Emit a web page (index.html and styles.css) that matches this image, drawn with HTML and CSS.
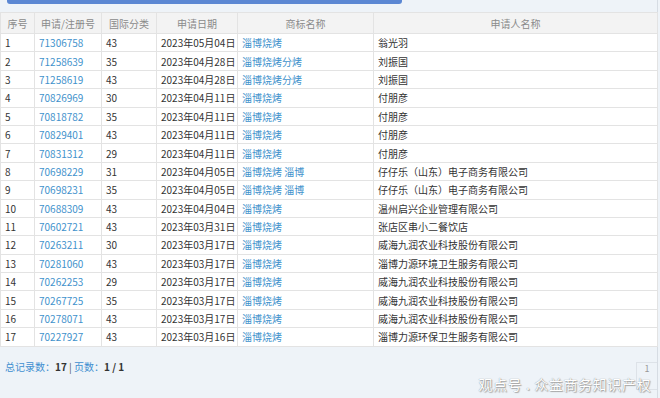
FILE: index.html
```html
<!DOCTYPE html>
<html lang="zh">
<head>
<meta charset="utf-8">
<link rel="stylesheet" href="styles.css">
</head>
<body>
<div class="page">
  <div class="topbar"></div>
  <table class="grid">
    <colgroup>
      <col class="c1"><col class="c2"><col class="c3"><col class="c4"><col class="c5"><col class="c6">
    </colgroup>
    <thead>
      <tr><th>序号</th><th>申请/注册号</th><th>国际分类</th><th>申请日期</th><th>商标名称</th><th>申请人名称</th></tr>
    </thead>
    <tbody>
      <tr><td>1</td><td><a>71306758</a></td><td>43</td><td>2023年05月04日</td><td><a>淄博烧烤</a></td><td>翁光羽</td></tr>
      <tr><td>2</td><td><a>71258639</a></td><td>35</td><td>2023年04月28日</td><td><a>淄博烧烤分烤</a></td><td>刘振国</td></tr>
      <tr><td>3</td><td><a>71258619</a></td><td>43</td><td>2023年04月28日</td><td><a>淄博烧烤分烤</a></td><td>刘振国</td></tr>
      <tr><td>4</td><td><a>70826969</a></td><td>30</td><td>2023年04月11日</td><td><a>淄博烧烤</a></td><td>付朋彦</td></tr>
      <tr><td>5</td><td><a>70818782</a></td><td>35</td><td>2023年04月11日</td><td><a>淄博烧烤</a></td><td>付朋彦</td></tr>
      <tr><td>6</td><td><a>70829401</a></td><td>43</td><td>2023年04月11日</td><td><a>淄博烧烤</a></td><td>付朋彦</td></tr>
      <tr><td>7</td><td><a>70831312</a></td><td>29</td><td>2023年04月11日</td><td><a>淄博烧烤</a></td><td>付朋彦</td></tr>
      <tr><td>8</td><td><a>70698229</a></td><td>31</td><td>2023年04月05日</td><td><a>淄博烧烤 淄博</a></td><td>仔仔乐（山东）电子商务有限公司</td></tr>
      <tr><td>9</td><td><a>70698231</a></td><td>35</td><td>2023年04月05日</td><td><a>淄博烧烤 淄博</a></td><td>仔仔乐（山东）电子商务有限公司</td></tr>
      <tr><td>10</td><td><a>70688309</a></td><td>43</td><td>2023年04月04日</td><td><a>淄博烧烤</a></td><td>温州启兴企业管理有限公司</td></tr>
      <tr><td>11</td><td><a>70602721</a></td><td>43</td><td>2023年03月31日</td><td><a>淄博烧烤</a></td><td>张店区串小二餐饮店</td></tr>
      <tr><td>12</td><td><a>70263211</a></td><td>30</td><td>2023年03月17日</td><td><a>淄博烧烤</a></td><td>威海九润农业科技股份有限公司</td></tr>
      <tr><td>13</td><td><a>70281060</a></td><td>43</td><td>2023年03月17日</td><td><a>淄博烧烤</a></td><td>淄博力源环境卫生服务有限公司</td></tr>
      <tr><td>14</td><td><a>70262253</a></td><td>29</td><td>2023年03月17日</td><td><a>淄博烧烤</a></td><td>威海九润农业科技股份有限公司</td></tr>
      <tr><td>15</td><td><a>70267725</a></td><td>35</td><td>2023年03月17日</td><td><a>淄博烧烤</a></td><td>威海九润农业科技股份有限公司</td></tr>
      <tr><td>16</td><td><a>70278071</a></td><td>43</td><td>2023年03月17日</td><td><a>淄博烧烤</a></td><td>威海九润农业科技股份有限公司</td></tr>
      <tr><td>17</td><td><a>70227927</a></td><td>43</td><td>2023年03月16日</td><td><a>淄博烧烤</a></td><td>淄博力源环保卫生服务有限公司</td></tr>
    </tbody>
  </table>
  <div class="footer">
    <div class="summary"><span class="lbl">总记录数：</span><b>17</b> <span class="sep">|</span> <span class="lbl">页数：</span><b>1 / 1</b></div>
    <div class="pager">1</div>
  </div>
  <div class="watermark">观点号 . 众益商务知识产权</div>
</div>
</body>
</html>
```
FILE: styles.css
```css
html, body {
  margin: 0;
  padding: 0;
  background: #eef3f8;
}
body {
  width: 660px;
  height: 398px;
  overflow: hidden;
  font-family: "Noto Sans CJK SC", "Noto Sans", sans-serif;
  font-size: 10px;
  color: #333;
}
.page {
  position: relative;
  width: 657px;
  height: 398px;
  border-right: 1px solid #d6dce3;
  background: #eef3f8;
}
.topbar {
  margin-left: 7px;
  width: 395px;
  height: 4px;
  background: #5b87d3;
  border-radius: 0 0 3px 3px;
}
.grid {
  margin-top: 8px;
  width: 657px;
  border-collapse: collapse;
  table-layout: fixed;
  background: #fff;
}
.c1 { width: 34px; }
.c2 { width: 67px; }
.c3 { width: 55px; }
.c4 { width: 81px; }
.c5 { width: 136px; }
.c6 { width: 284px; }
.grid th, .grid td {
  border: 1px solid #e3e3e3;
  padding: 0 4px;
  white-space: nowrap;
  overflow: hidden;
}
.grid th {
  height: 20px;
  background: #f3f3f3;
  color: #8a8a8a;
  font-weight: normal;
  text-align: center;
}
.grid td {
  height: 17.4px;
  text-align: left;
}
.grid a {
  color: #3f92cc;
}
.footer {
  display: flex;
  justify-content: space-between;
  align-items: flex-start;
  padding: 14px 0 0 5px;
}
.summary {
  margin-top: -2px;
}
.summary .lbl { color: #3f8fd0; }
.summary b { color: #333; font-weight: bold; }
.summary .sep { color: #555; }
.pager {
  box-sizing: border-box;
  width: 21px;
  height: 28px;
  margin-top: 1px;
  padding-top: 1px;
  border: 1px solid #dde2e8;
  border-right: 0;
  color: #999;
  text-align: center;
  font-size: 9px;
  line-height: 10px;
}
.watermark {
  position: absolute;
  right: 6px;
  top: 377px;
  font-size: 14px;
  line-height: 15px;
  letter-spacing: 0.6px;
  color: #fff;
  text-shadow: 0 0 1px #777, 1px 1px 1px #aaa;
}
```
